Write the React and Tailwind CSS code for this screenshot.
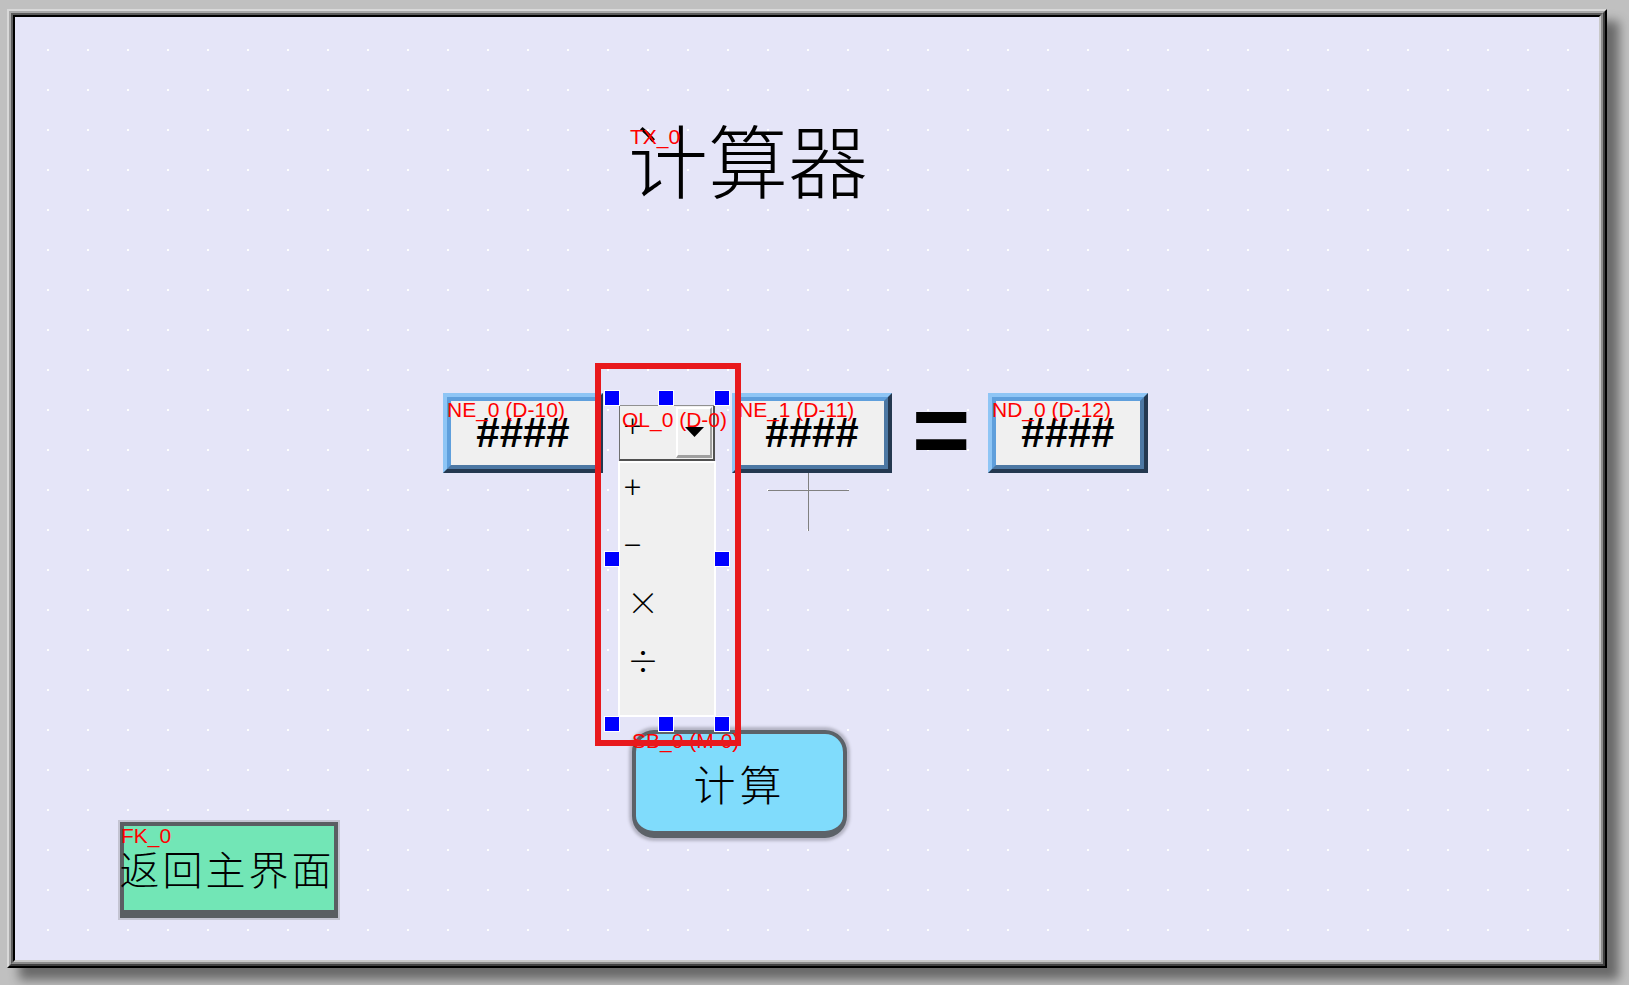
import React from 'react';

const cjk = "font-['Noto_Sans_CJK_SC',sans-serif]";
const tag = "absolute text-[21px] leading-none text-[#ff0000] whitespace-nowrap font-['Liberation_Sans',sans-serif]";

function NumBox({ left }) {
  return (
    <div className={`absolute top-[376px] w-[160px] h-[80px] border-4 border-t-[#8ec5f5] border-l-[#8ec5f5] border-r-[#243850] border-b-[#243850] ${left}`}>
      <div className="h-full border-4 border-t-[#5f9fdc] border-l-[#5f9fdc] border-r-[#4d78a4] border-b-[#4d78a4] bg-[#f0f0f0] flex items-center justify-center">
        <span className="text-[42px] leading-none font-bold text-black font-['Liberation_Sans',sans-serif]">####</span>
      </div>
    </div>
  );
}

function Handle({ pos }) {
  return <div className={`absolute w-[16px] h-[16px] bg-[#0000ff] border border-white ${pos}`} />;
}

function Frame({ children }) {
  return (
    <div className="w-[1600px] h-[959px] shadow-[12px_12px_10px_rgba(0,0,0,0.45)] border-2 border-t-[#d8d8d8] border-l-[#d8d8d8] border-r-black border-b-black">
      <div className="h-full border-2 border-t-[#a8a8a8] border-l-[#a8a8a8] border-r-[#404040] border-b-[#404040]">
        <div className="h-full border-2 border-t-[#5c5c5c] border-l-[#5c5c5c] border-r-[#8c8c8c] border-b-[#8c8c8c]">
          <div className="h-full border-2 border-t-black border-l-black border-r-[#c8c8c8] border-b-[#c8c8c8]">
            {children}
          </div>
        </div>
      </div>
    </div>
  );
}

export default function App() {
  return (
    <div className="w-[1629px] h-[985px] overflow-hidden bg-[#c0c0c0] pl-[7px] pt-[9px]">
      <Frame>
        <div className="relative h-full bg-[#e5e5f8] bg-[radial-gradient(circle,#ffffff_0.9px,transparent_1px)] bg-[length:40px_40px] bg-[position:13px_13px]">
          {/* title */}
          <div className={`absolute left-[613px] top-[100px] text-[80px] leading-none font-light text-black ${cjk}`}>计算器</div>
          <div className={`${tag} left-[615px] top-[109px]`}>TX_0</div>

          {/* value boxes */}
          <NumBox left="left-[428px]" />
          <NumBox left="left-[717px]" />
          <NumBox left="left-[973px]" />
          <div className="absolute left-[897px] top-[362px] text-[100px] leading-none font-bold text-black font-['Liberation_Sans',sans-serif]">=</div>

          {/* operator combo + list */}
          <div className="absolute left-[604px] top-[388px] w-[96px] h-[56px] flex bg-[#f0f0f0] border-t border-l border-t-[#909090] border-l-[#707070] border-r-2 border-b-2 border-r-[#505050] border-b-[#505050]">
            <div className={`flex-1 pl-[4px] pt-[2px] text-[32px] leading-none font-light text-black ${cjk}`}>+</div>
            <div className="w-[36px] my-[1px] mr-[1px] flex items-center justify-center border-t-2 border-l-2 border-t-white border-l-white border-r-2 border-r-[#a0a0a0] border-b-[3px] border-b-[#a0a0a0]">
              <svg width="19" height="10" viewBox="0 0 19 10"><path d="M0 0H19L9.5 10Z" fill="#000" /></svg>
            </div>
          </div>
          <div className={`absolute left-[603px] top-[444px] w-[98px] h-[256px] bg-[#f0f0f0] border-2 border-white text-[32px] leading-none font-light text-black ${cjk}`}>
            {['+', '−', '×', '÷'].map((op, i) => (
              <div key={op} className={`h-[58px] pt-[6px] ${i < 2 ? 'pl-[4px]' : 'pl-[7px]'}`}>{op}</div>
            ))}
          </div>
          <div className={`${tag} left-[607px] top-[392px]`}>OL_0 (D-0)</div>

          {/* labels for value boxes */}
          <div className={`${tag} left-[432px] top-[382px]`}>NE_0 (D-10)</div>
          <div className={`${tag} left-[723px] top-[382px]`}>NE_1 (D-11)</div>
          <div className={`${tag} left-[977px] top-[382px]`}>ND_0 (D-12)</div>

          {/* calc button */}
          <div className="absolute left-[617px] top-[713px] w-[215px] h-[108px] rounded-[22px] bg-[#80dcfc] border-4 border-b-[7px] border-[#5c6268] shadow-[0_0_3px_3px_#b4b4c4] flex items-center justify-center">
            <span className={`text-[42px] leading-none tracking-[4px] text-black font-light ${cjk}`}>计算</span>
          </div>
          <div className={`${tag} left-[617px] top-[713px]`}>SB_0 (M-0)</div>

          {/* selection frame */}
          <div className="absolute left-[580px] top-[346px] w-[146px] h-[383px] border-[6px] border-[#e8191d]" />
          <Handle pos="left-[589px] top-[373px]" />
          <Handle pos="left-[643px] top-[373px]" />
          <Handle pos="left-[699px] top-[373px]" />
          <Handle pos="left-[589px] top-[534px]" />
          <Handle pos="left-[699px] top-[534px]" />
          <Handle pos="left-[589px] top-[699px]" />
          <Handle pos="left-[643px] top-[699px]" />
          <Handle pos="left-[699px] top-[699px]" />

          {/* crosshair cursor */}
          <svg className="absolute left-[753px] top-[456px]" width="82" height="59" viewBox="0 0 82 59">
            <path d="M40.5 0V58M0 17.5H81" stroke="#808080" strokeWidth="1" fill="none" />
          </svg>

          {/* back button */}
          <div className="absolute left-[105px] top-[805px] w-[218px] h-[96px] bg-[#72e6b6] border-4 border-b-[8px] border-[#5a5e62] shadow-[0_0_0_2px_#c4c4d2] flex items-center justify-center">
            <span className={`-ml-[4px] text-[40px] leading-none tracking-[3px] whitespace-nowrap text-black font-light ${cjk}`}>返回主界面</span>
          </div>
          <div className={`${tag} left-[106px] top-[808px]`}>FK_0</div>
        </div>
      </Frame>
    </div>
  );
}
